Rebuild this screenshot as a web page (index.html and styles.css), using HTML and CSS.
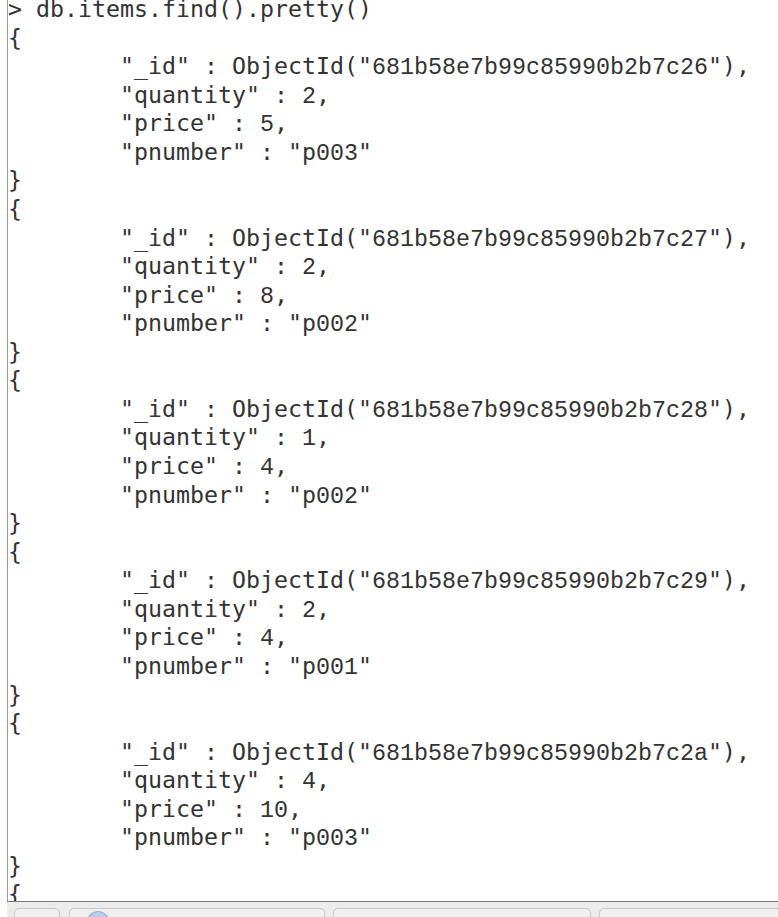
FILE: index.html
```html
<!DOCTYPE html>
<html>
<head>
<meta charset="utf-8">
<link rel="stylesheet" href="styles.css">
</head>
<body>
<div class="screen">
  <div class="terminal">
<pre class="output">&gt; db.items.find().pretty()
{
        "_id" : ObjectId("<span class="n">681b58e7b99c85990b2b7c26</span>"),
        "quantity" : <span class="n">2</span>,
        "price" : <span class="n">5</span>,
        "pnumber" : "p<span class="n">003</span>"
}
{
        "_id" : ObjectId("<span class="n">681b58e7b99c85990b2b7c27</span>"),
        "quantity" : <span class="n">2</span>,
        "price" : <span class="n">8</span>,
        "pnumber" : "p<span class="n">002</span>"
}
{
        "_id" : ObjectId("<span class="n">681b58e7b99c85990b2b7c28</span>"),
        "quantity" : <span class="n">1</span>,
        "price" : <span class="n">4</span>,
        "pnumber" : "p<span class="n">002</span>"
}
{
        "_id" : ObjectId("<span class="n">681b58e7b99c85990b2b7c29</span>"),
        "quantity" : <span class="n">2</span>,
        "price" : <span class="n">4</span>,
        "pnumber" : "p<span class="n">001</span>"
}
{
        "_id" : ObjectId("<span class="n">681b58e7b99c85990b2b7c2a</span>"),
        "quantity" : <span class="n">4</span>,
        "price" : <span class="n">10</span>,
        "pnumber" : "p<span class="n">003</span>"
}
{</pre>
  </div>
  <div class="taskbar">
    <div class="tab tab-small"></div>
    <div class="tab tab-wide"><span class="tab-icon"></span></div>
    <div class="tab tab-wide2"></div>
    <div class="tab tab-rest"></div>
  </div>
</div>
</body>
</html>
```

FILE: styles.css
```css
html, body {
  margin: 0;
  padding: 0;
  background: #ffffff;
  overflow: hidden;
}

.screen {
  display: flex;
  flex-direction: column;
  height: 917px;
  margin-left: 7px;
}

.terminal {
  flex: 1;
  overflow: hidden;
  border-left: 1px solid #9c9c9c;
  background: #ffffff;
}

.output {
  margin: -5px 0 0 0;
  font-family: "DejaVu Sans Mono", monospace;
  font-size: 23.25px;
  line-height: 28.57px;
  color: #333333;
  white-space: pre;
}

.n {
  font-family: "Liberation Mono", monospace;
  font-size: 23.33px;
  line-height: 1;
  color: #333333;
}

.taskbar {
  height: 9px;
  border-top: 1px solid #7a7a7a;
  background: #ececec;
  display: flex;
  align-items: flex-start;
  padding: 6px 0 0 7px;
  gap: 8px;
  overflow: hidden;
}

.tab {
  height: 20px;
  flex: none;
  border: 1px solid #c6c6c6;
  border-radius: 5px 5px 0 0;
  background: #f1f1f1;
  box-sizing: border-box;
}

.tab-small { width: 46px; }
.tab-wide { width: 256px; margin-left: 1px; position: relative; }
.tab-wide2 { width: 258px; }
.tab-rest { flex: 1; margin-right: -10px; }

.tab-icon {
  position: absolute;
  left: 16px;
  top: 2px;
  width: 24px;
  height: 24px;
  border-radius: 50%;
  background: #b9cbe8;
  border: 1px solid #93acd4;
  box-sizing: border-box;
}
```
